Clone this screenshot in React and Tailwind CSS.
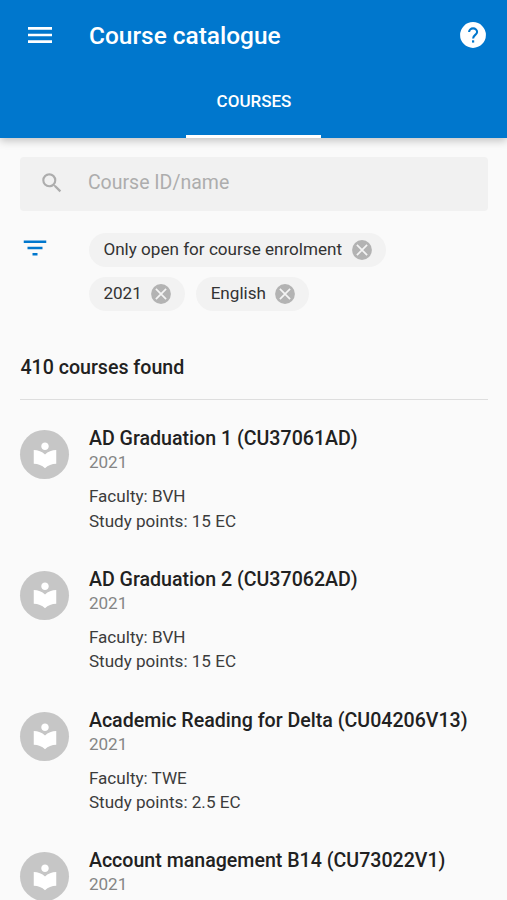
import { useState } from 'react';
import { MdMenu, MdSearch, MdFilterList, MdLocalLibrary } from 'react-icons/md';

const initialFilters = [
  { id: 'open', label: 'Only open for course enrolment' },
  { id: 'year', label: '2021' },
  { id: 'language', label: 'English' }
];

const courses = [
  { code: 'CU37061AD', name: 'AD Graduation 1', year: '2021', faculty: 'BVH', points: '15' },
  { code: 'CU37062AD', name: 'AD Graduation 2', year: '2021', faculty: 'BVH', points: '15' },
  { code: 'CU04206V13', name: 'Academic Reading for Delta', year: '2021', faculty: 'TWE', points: '2.5' },
  { code: 'CU73022V1', name: 'Account management B14', year: '2021' }
];

function HelpIcon() {
  return (
    <svg className="size-[26px]" viewBox="0 0 26 26" fill="none">
      <circle cx="13" cy="13" r="12.9" fill="white" />
      <path d="M9.1 10.1a4 3.7 0 0 1 8 0c0 2.7-4 3-4 6.3" stroke="#0077cd" strokeWidth="2.1" />
      <path d="M12 18.3h2.2v2.3H12z" fill="#0077cd" />
    </svg>
  );
}

function Header() {
  return (
    <header className="h-[137.5px] shrink-0 flex flex-col bg-[#0077cd] text-white shadow-[0_3px_8px_rgba(0,0,0,0.22)]">
      <div className="h-[70px] flex items-center pl-6 pr-[21px]">
        <button aria-label="Menu">
          <MdMenu className="size-8" />
        </button>
        <h1 className="ml-[33px] pt-px flex-1 text-[24.45px] leading-8 font-medium">Course catalogue</h1>
        <button className="pb-px" aria-label="Help">
          <HelpIcon />
        </button>
      </div>
      <nav className="flex-1 flex justify-center">
        <button className="w-[135px] border-b-[3px] border-white pb-[1px] pl-px text-[17px] font-medium">COURSES</button>
      </nav>
    </header>
  );
}

function RemoveIcon() {
  return (
    <svg className="size-5" viewBox="0 0 20 20" fill="none">
      <circle cx="10" cy="10" r="9.9" fill="#b3b3b3" />
      <path d="M4.9 4.9l10.2 10.2M15.1 4.9L4.9 15.1" stroke="#f4f4f4" strokeWidth="1.7" />
    </svg>
  );
}

function FilterChip({ label, onRemove }) {
  return (
    <div className="h-[34px] flex items-center rounded-full bg-[#f2f2f2] pl-[14.5px] pr-[14px] text-[17.1px] text-[#333333]">
      <span className="pb-px">{label}</span>
      <button className="ml-[9.5px]" onClick={onRemove} aria-label={`Remove ${label}`}>
        <RemoveIcon />
      </button>
    </div>
  );
}

function CourseItem({ course }) {
  return (
    <li className="h-[140.8px] flex">
      <div className="mt-[5px] size-[49px] shrink-0 rounded-full bg-[#c6c6c6] flex items-center justify-center">
        <MdLocalLibrary className="size-[30px] text-white" />
      </div>
      <div className="ml-[19.5px] whitespace-nowrap text-[17.1px] leading-[24.5px] text-[#3c3c3c]">
        <h2 className="mt-px text-[19.6px] leading-[26px] font-medium text-[#212121]">
          {course.name} ({course.code})
        </h2>
        <p className="-mt-px leading-[22px] text-[#858585]">{course.year}</p>
        {course.faculty && <p className="mt-[11px]">Faculty: {course.faculty}</p>}
        {course.points && <p>Study points: {course.points} EC</p>}
      </div>
    </li>
  );
}

function App() {
  const [filters, setFilters] = useState(initialFilters);
  const [query, setQuery] = useState('');

  const removeFilter = (id) => {
    setFilters(filters.filter((filter) => filter.id !== id));
  };

  return (
    <div className="h-screen flex flex-col overflow-hidden bg-[#fafafa] font-['Roboto',sans-serif]">
      <Header />

      <main className="pl-[20.4px] pr-[19.5px]">
        {/* Search */}
        <div className="mt-[19.5px] h-[54px] flex items-center rounded bg-[#f1f1f1] pl-[19px]">
          <MdSearch className="mb-[2px] size-[26px] text-[#adadad]" />
          <input
            className="ml-[22.5px] flex-1 bg-transparent pb-0.5 text-[19.5px] text-[#333333] placeholder:text-[#adadad] outline-none"
            placeholder="Course ID/name"
            value={query}
            onChange={(e) => setQuery(e.target.value)}
          />
        </div>

        {/* Active filters */}
        <div className="mt-[22px] flex">
          <button className="-ml-[0.5px] h-[29px] shrink-0" aria-label="Filters">
            <MdFilterList className="size-[30px] text-[#0077cd]" />
          </button>
          <div className="ml-[39px] flex flex-wrap gap-x-[10.8px] gap-y-[10px]">
            {filters.map((filter) => (
              <FilterChip key={filter.id} label={filter.label} onRemove={() => removeFilter(filter.id)} />
            ))}
          </div>
        </div>

        <p className="mt-11 border-b border-[#dedede] pb-[18px] text-[19.6px] leading-[26px] font-medium text-[#212121]">
          410 courses found
        </p>

        {/* Results */}
        <ul className="mt-[25px]">
          {courses.map((course) => (
            <CourseItem key={course.code} course={course} />
          ))}
        </ul>
      </main>
    </div>
  );
}

export default App;
